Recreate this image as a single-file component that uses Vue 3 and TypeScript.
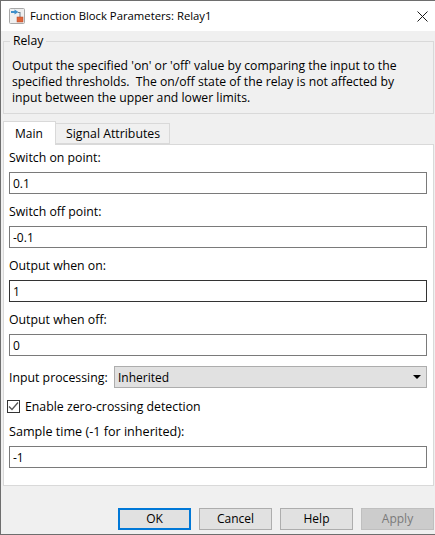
<template>
  <div class="dialog">
    <div class="titlebar">
      <svg class="app-icon" width="16" height="16" viewBox="0 0 16 16">
        <rect x="0.5" y="0.5" width="15" height="15" rx="1" fill="#efefef" stroke="#a8a8a8" />
        <path d="M2 3h3.500v-1.500l4 2.500-4 2.500v-1.500h-3.500z" fill="#3f8fc9" />
        <path d="M9 4h2.500v5h-1v-4h-1.500z" fill="#6d7f8c" />
        <rect x="8" y="9" width="6" height="5" fill="#e0663a" stroke="#b5482a" stroke-width="0.500" />
      </svg>
      <span class="title">Function Block Parameters: Relay1</span>
      <svg class="close" width="11" height="11" viewBox="0 0 11 11">
        <path d="M0.500 0.500l10 10M10.500 0.500l-10 10" stroke="#1a1a1a" stroke-width="1" fill="none" />
      </svg>
    </div>

    <fieldset class="group">
      <legend>Relay</legend>
      <p>Output the specified 'on' or 'off' value by comparing the input to the<br />specified thresholds.&nbsp; The on/off state of the relay is not affected by<br />input between the upper and lower limits.</p>
    </fieldset>

    <div class="tabs">
      <div v-for="t in tabs" :key="t" class="tab" :class="{ active: t === 'Main' }">{{ t }}</div>
    </div>

    <div class="panel">
      <div v-for="f in topFields" :key="f.label" class="field">
        <label>{{ f.label }}</label>
        <input type="text" :value="f.value" :class="{ focus: f.focus }" readonly />
      </div>
      <div class="select-row">
        <label>Input processing:</label>
        <div class="select">
          <span>Inherited</span>
          <i class="arrow"></i>
        </div>
      </div>
      <div class="check-row">
        <span class="box">
          <svg width="11" height="11" viewBox="0 0 11 11">
            <path d="M1 5.500l3 3 6-7" stroke="#555" stroke-width="1.300" fill="none" />
          </svg>
        </span>
        <span>Enable zero-crossing detection</span>
      </div>
      <div class="field">
        <label class="wide">Sample time (-1 for inherited):</label>
        <input type="text" value="-1" readonly />
      </div>
    </div>

    <div class="buttons">
      <button v-for="b in buttons" :key="b" type="button" :class="{ primary: b === 'OK', off: b === 'Apply' }">{{ b }}</button>
    </div>
  </div>
</template>

<script setup lang="ts">
const tabs: string[] = ['Main', 'Signal Attributes'];
const topFields: { label: string; value: string; focus?: boolean }[] = [
  { label: 'Switch on point:', value: '0.1' },
  { label: 'Switch off point:', value: '-0.1' },
  { label: 'Output when on:', value: '1', focus: true },
  { label: 'Output when off:', value: '0' },
];
const buttons: string[] = ['OK', 'Cancel', 'Help', 'Apply'];
</script>

<style>
html, body { margin: 0; background: #f0f0f0; }
</style>

<style scoped>
.dialog {
  box-sizing: border-box;
  width: 435px;
  height: 535px;
  display: flex;
  flex-direction: column;
  background: #f0f0f0;
  border-top: 1px solid #6e6e6e;
  border-left: 1px solid #6e6e6e;
  border-bottom: 1px solid #6e6e6e;
  font: 12px/16px "Open Sans", "Noto Sans", sans-serif;
  color: #000;
}
.titlebar {
  flex: none;
  height: 30px;
  background: #fff;
  display: flex;
  align-items: center;
  padding: 0 7px 0 8px;
  gap: 5px;
}
.title { flex: 1; font-size: 11.3px; }
.group {
  flex: none;
  box-sizing: border-box;
  margin: 2px 1px 0 2px;
  height: 81px;
  padding: 0 8px;
  border: 1px solid #d9d9d9;
  min-width: 0;
}
.group legend { padding: 0 3px; margin-left: -2px; line-height: 16px; font-size: 12.2px; }
.group p { margin: 9px 0 0; white-space: nowrap; line-height: 16px; font-size: 12.2px; }
.tabs {
  flex: none;
  display: flex;
  align-items: flex-end;
  height: 23px;
  margin: 7px 0 0 2px;
  position: relative;
  z-index: 1;
}
.tab {
  height: 21px;
  padding: 0 9px 0 10px;
  line-height: 20px;
  background: #f0f0f0;
  border: 1px solid #d9d9d9;
  border-left: 0;
  box-sizing: border-box;
  font-size: 12.3px;
}
.tab.active {
  height: 24px;
  width: 53px;
  padding: 2px 0 0 11px;
  background: #fff;
  border-left: 1px solid #d9d9d9;
  border-bottom: 0;
  margin-bottom: -1px;
  font-size: 12px;
}
.panel {
  flex: none;
  box-sizing: border-box;
  height: 342px;
  margin: 0 1px 0 2px;
  padding: 5px 5px 0;
  background: #fff;
  border: 1px solid #d9d9d9;
  font-size: 12.3px;
}
.field { display: flex; flex-direction: column; height: 54px; }
.field label { height: 22px; line-height: 16px; }
.field label.wide { font-size: 12.6px; }
.field input {
  box-sizing: border-box;
  width: 418px;
  height: 22px;
  padding: 0 3px;
  border: 1px solid #7a7a7a;
  background: #fff;
  font: 12px/16px "Open Sans", "Noto Sans", sans-serif;
  color: #000;
  outline: none;
}
.field input.focus { border-color: #333; }
.select-row { display: flex; align-items: center; height: 22px; }
.select-row label { width: 105px; flex: none; padding-top: 2px; }
.select {
  box-sizing: border-box;
  flex: none;
  width: 313px;
  height: 22px;
  display: flex;
  align-items: center;
  justify-content: space-between;
  padding: 0 5px 0 3px;
  background: #e1e1e1;
  border: 1px solid #adadad;
  font-size: 12px;
}
.select span { padding-top: 2px; }
.arrow {
  width: 0;
  height: 0;
  border-left: 4px solid transparent;
  border-right: 4px solid transparent;
  border-top: 4px solid #000;
}
.check-row { display: flex; align-items: center; height: 13px; margin: 12px 0 0 -2px; gap: 5px; }
.box {
  box-sizing: border-box;
  width: 13px;
  height: 13px;
  border: 1px solid #333;
  display: flex;
  align-items: center;
  justify-content: center;
  background: #fff;
}
.check-row + .field { margin-top: 11px; }
.buttons {
  flex: none;
  display: flex;
  justify-content: flex-end;
  gap: 8px;
  margin-top: 22px;
  padding-right: 1px;
}
.buttons button {
  box-sizing: border-box;
  width: 73px;
  height: 22px;
  padding: 0;
  background: #e1e1e1;
  border: 1px solid #adadad;
  font: inherit;
  color: #000;
}
.buttons button.primary { border: 2px solid #0078d7; }
.buttons button.off { background: #cccccc; border-color: #bfbfbf; color: #7a7a7a; }
</style>
